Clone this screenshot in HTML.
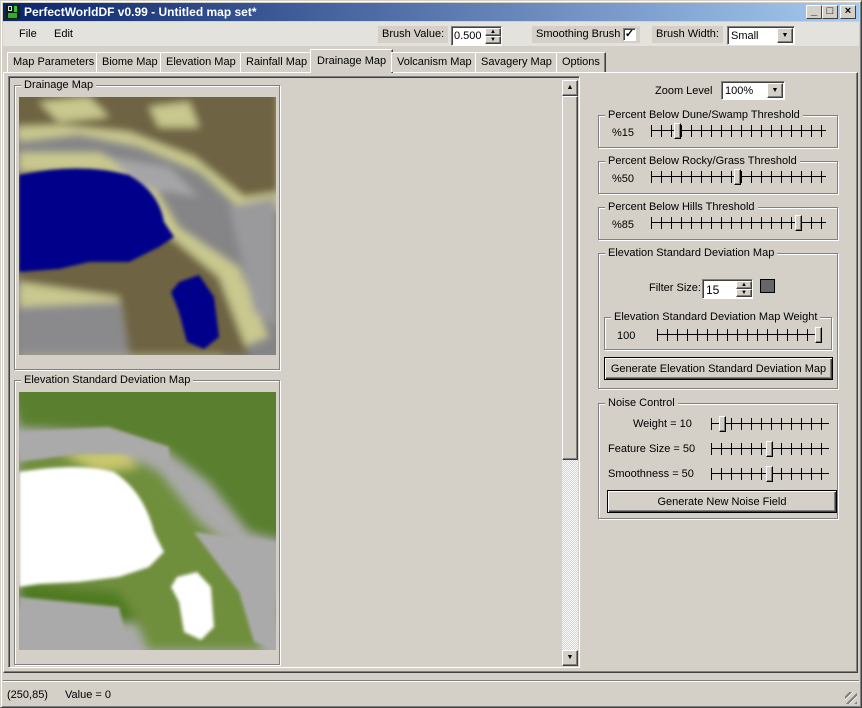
<!DOCTYPE html>
<html><head><style>
*{box-sizing:border-box;margin:0;padding:0}
body{width:862px;height:708px;background:#d4d0c8;font-family:"Liberation Sans",sans-serif;font-size:11px;color:#000;position:relative;overflow:hidden}
.a{position:absolute}
.win{left:0;top:0;width:862px;height:708px;border:1px solid;border-color:#d4d0c8 #404040 #404040 #d4d0c8;box-shadow:inset 1px 1px #fff,inset -1px -1px #808080}
.title{left:3px;top:3px;width:856px;height:18px;background:linear-gradient(90deg,#0a246a,#a6caf0);color:#fff;font-weight:bold;font-size:12px;line-height:18px;padding-left:21px}
.tb{width:16px;height:14px;top:5px;background:#d4d0c8;border:1px solid;border-color:#fff #404040 #404040 #fff;font-size:11px;color:#000;text-align:center;line-height:11px;font-weight:bold}
.bar{left:3px;top:22px;width:856px;height:24px;background:#e4e2dc}
.lbl{background:#d4d0c8;height:17px;line-height:17px;padding:0 4px;top:26px}
.sunk{background:#fff;border:1px solid;border-color:#808080 #fff #fff #808080;box-shadow:inset 1px 1px #404040}
.rais{background:#d4d0c8;border:1px solid;border-color:#fff #404040 #404040 #fff;box-shadow:inset -1px -1px #808080;font-size:6px;text-align:center;line-height:6px}
.tab{top:52px;height:20px;line-height:18px;padding:0 5px;border:1px solid;border-color:#fff #404040 transparent #fff;border-bottom:none;box-shadow:inset -1px 0 #808080;background:#d4d0c8}
.grp{border:1px solid #808080;box-shadow:1px 1px #fff,inset 1px 1px #fff}
.gt{position:absolute;top:-7px;left:6px;background:#d4d0c8;padding:0 3px;line-height:13px}
.sl{height:12px;background:repeating-linear-gradient(90deg,#000 0 1px,transparent 1px 10px);}
.sl::before{content:"";position:absolute;left:0;right:0;top:5px;height:1px;background:#000}
.th{position:absolute;top:-2px;width:7px;height:16px;background:#d4d0c8;border:1px solid;border-color:#fff #000 #000 #fff;box-shadow:inset -1px -1px #808080}
.btn{text-align:center;line-height:22px;border:1px solid #000;background:#d4d0c8;box-shadow:inset 1px 1px #fff,inset -1px -1px #404040,inset -2px -2px #808080}
</style></head><body>
<div class="a win"></div>
<div class="a title">PerfectWorldDF v0.99 - Untitled map set*</div>
<div class="a" style="left:6px;top:5px;width:14px;height:14px;background:#102010"><div class="a" style="left:2px;top:1px;width:4px;height:5px;border:1px solid #ddd"></div><div class="a" style="left:8px;top:1px;width:3px;height:6px;background:#3c3"></div><div class="a" style="left:2px;top:8px;width:9px;height:5px;background:#3a3"></div></div>
<div class="a tb" style="left:806px">_</div>
<div class="a tb" style="left:822px">□</div>
<div class="a tb" style="left:840px">×</div>
<div class="a bar"></div>
<div class="a" style="left:19px;top:28px">File</div>
<div class="a" style="left:54px;top:28px">Edit</div>
<div class="a lbl" style="left:378px">Brush Value:</div>
<div class="a sunk" style="left:451px;top:26px;width:51px;height:20px;padding:3px 2px">0.500</div>
<div class="a rais" style="left:485px;top:28px;width:16px;height:8px">▲</div>
<div class="a rais" style="left:485px;top:36px;width:16px;height:8px">▼</div>
<div class="a lbl" style="left:532px;width:108px">Smoothing Brush</div>
<div class="a sunk" style="left:623px;top:28px;width:13px;height:13px;font-size:11px;line-height:10px;text-align:center;font-weight:bold">✓</div>
<div class="a lbl" style="left:652px">Brush Width:</div>
<div class="a sunk" style="left:727px;top:26px;width:68px;height:19px;padding:3px 3px">Small</div>
<div class="a rais" style="left:777px;top:28px;width:16px;height:15px;font-size:7px;line-height:13px">▼</div>

<div class="a" style="left:3px;top:72px;width:855px;height:601px;border:1px solid;border-color:#fff #404040 #404040 #fff;box-shadow:inset -1px -1px #808080"></div>
<div class="a tab" style="left:7px">Map Parameters</div>
<div class="a tab" style="left:96px">Biome Map</div>
<div class="a tab" style="left:160px">Elevation Map</div>
<div class="a tab" style="left:240px">Rainfall Map</div>
<div class="a tab" style="left:310px;top:49px;height:24px;line-height:22px;padding:0 6px">Drainage Map</div>
<div class="a tab" style="left:391px">Volcanism Map</div>
<div class="a tab" style="left:475px">Savagery Map</div>
<div class="a tab" style="left:556px">Options</div>

<div class="a" style="left:8px;top:76px;width:572px;height:592px;border:1px solid;border-color:#808080 #fff #fff #808080;box-shadow:inset 1px 1px #404040"></div>
<div class="a" style="left:562px;top:80px;width:16px;height:586px;background:repeating-conic-gradient(#d4d0c8 0 25%,#fff 0 50%) 0 0/2px 2px"></div>
<div class="a rais" style="left:562px;top:80px;width:16px;height:16px;font-size:7px;line-height:13px">▲</div>
<div class="a rais" style="left:562px;top:96px;width:16px;height:364px"></div>
<div class="a rais" style="left:562px;top:650px;width:16px;height:16px;font-size:7px;line-height:13px">▼</div>

<div class="a grp" style="left:14px;top:85px;width:266px;height:285px"><span class="gt">Drainage Map</span></div>
<svg class="a" style="left:19px;top:97px" width="257" height="258">
<defs><filter id="b"><feGaussianBlur stdDeviation="4"/></filter><filter id="b2"><feGaussianBlur stdDeviation="1.5"/></filter></defs>
<rect width="257" height="258" fill="#858587"/>
<g filter="url(#b)">
<path d="M-10 -10H270V110L230 120 180 75 120 50 60 38 0 45Z" fill="#c9c88f"/>
<path d="M-10 -10H260V95L225 100 175 60 110 35 40 28 -10 30Z" fill="#6e6443"/>
<path d="M20 5L70 0 90 20 40 25Z" fill="#c9c88f"/>
<path d="M130 10L170 5 180 30 140 30Z" fill="#c9c88f"/>
<path d="M0 55L80 55 130 80 160 130 220 170 250 240 200 260 0 260Z" fill="#c9c88f"/>
<path d="M0 75L90 75 140 130 200 180 230 258 110 258 100 200 0 185Z" fill="#6e6443"/>
<path d="M0 210L100 205 110 258 0 258Z" fill="#8a8a8d"/>
<path d="M210 110L257 100 257 230 235 215Z" fill="#9a9a9c"/>
<path d="M90 60L150 70 180 100 120 90Z" fill="#a5a5a8"/>
</g>
<g filter="url(#b2)">
<path d="M0 78Q60 65 110 78Q140 95 145 125L155 140 140 150 110 165 70 165 40 172 0 175Z" fill="#00008b"/>
<path d="M160 185L180 178 195 200 200 240 185 252 168 245 160 215 152 195Z" fill="#00008b"/>
</g>
</svg>

<div class="a grp" style="left:14px;top:380px;width:266px;height:285px"><span class="gt">Elevation Standard Deviation Map</span></div>
<svg class="a" style="left:19px;top:392px" width="257" height="258">
<defs><filter id="c"><feGaussianBlur stdDeviation="5"/></filter><filter id="c2"><feGaussianBlur stdDeviation="1.5"/></filter></defs>
<rect width="257" height="258" fill="#aaaaaa"/>
<g filter="url(#c)">
<path d="M-10 -10H270V150L230 140 190 90 150 60 80 40 0 35Z" fill="#5a7f2e"/>
<path d="M0 60L80 50 140 80 180 130 230 170 260 220 240 258 130 258 110 215 0 200Z" fill="#6f8f3c"/>
<path d="M40 60L100 55 120 75 80 80Z" fill="#c8c86e"/>
<path d="M0 190L100 200 120 230 60 230 0 215Z" fill="#4f7a22"/>
</g>
<path d="M0 40L90 35 150 55 150 70 120 62 60 62 0 70Z" fill="#aaaaaa" filter="url(#c2)"/>
<path d="M175 140L257 150 257 258 235 250 220 200Z" fill="#aaaaaa" filter="url(#c2)"/>
<path d="M0 205L100 215 110 258 0 258Z" fill="#aaaaaa" filter="url(#c2)"/>
<g filter="url(#c2)">
<path d="M0 80Q60 70 95 80Q125 100 135 140L145 160 130 175 100 185 60 190 20 192 0 195Z" fill="#fff"/>
<path d="M158 185L178 180 192 195 195 235 182 248 165 240 160 210 152 195Z" fill="#fff"/>
</g>
</svg>

<!-- right panel -->
<div class="a" style="left:655px;top:85px">Zoom Level</div>
<div class="a sunk" style="left:721px;top:81px;width:64px;height:19px;padding:3px 3px">100%</div>
<div class="a rais" style="left:767px;top:83px;width:16px;height:15px;font-size:7px;line-height:13px">▼</div>

<div class="a grp" style="left:598px;top:115px;width:240px;height:33px"><span class="gt">Percent Below Dune/Swamp Threshold</span></div>
<div class="a" style="left:612px;top:127px">%15</div>
<div class="a sl" style="left:651px;top:125px;width:175px"><div class="th" style="left:23px"></div></div>
<div class="a grp" style="left:598px;top:161px;width:240px;height:33px"><span class="gt">Percent Below Rocky/Grass Threshold</span></div>
<div class="a" style="left:612px;top:173px">%50</div>
<div class="a sl" style="left:651px;top:171px;width:175px"><div class="th" style="left:83px"></div></div>
<div class="a grp" style="left:598px;top:207px;width:240px;height:33px"><span class="gt">Percent Below Hills Threshold</span></div>
<div class="a" style="left:612px;top:219px">%85</div>
<div class="a sl" style="left:651px;top:217px;width:175px"><div class="th" style="left:144px"></div></div>

<div class="a grp" style="left:598px;top:253px;width:240px;height:136px"><span class="gt">Elevation Standard Deviation Map</span></div>
<div class="a" style="left:649px;top:282px">Filter Size:</div>
<div class="a sunk" style="left:702px;top:279px;width:51px;height:20px;padding:3px 3px;font-size:12px">15</div>
<div class="a rais" style="left:736px;top:281px;width:16px;height:8px">▲</div>
<div class="a rais" style="left:736px;top:289px;width:16px;height:8px">▼</div>
<div class="a" style="left:760px;top:279px;width:15px;height:14px;background:#666;border:1px solid #000"></div>
<div class="a grp" style="left:604px;top:317px;width:228px;height:33px"><span class="gt">Elevation Standard Deviation Map Weight</span></div>
<div class="a" style="left:617px;top:330px">100</div>
<div class="a sl" style="left:657px;top:329px;width:165px"><div class="th" style="left:158px"></div></div>
<div class="a btn" style="left:604px;top:357px;width:229px;height:23px">Generate Elevation Standard Deviation Map</div>

<div class="a grp" style="left:598px;top:403px;width:240px;height:116px"><span class="gt">Noise Control</span></div>
<div class="a" style="left:633px;top:418px">Weight = 10</div>
<div class="a sl" style="left:711px;top:418px;width:118px"><div class="th" style="left:8px"></div></div>
<div class="a" style="left:608px;top:443px">Feature Size = 50</div>
<div class="a sl" style="left:711px;top:443px;width:118px"><div class="th" style="left:55px"></div></div>
<div class="a" style="left:608px;top:468px">Smoothness = 50</div>
<div class="a sl" style="left:711px;top:468px;width:118px"><div class="th" style="left:55px"></div></div>
<div class="a btn" style="left:607px;top:490px;width:230px;height:23px">Generate New Noise Field</div>

<div class="a" style="left:3px;top:680px;width:856px;height:2px;border-top:1px solid #808080;border-bottom:1px solid #fff"></div>
<div class="a" style="left:7px;top:689px">(250,85)</div>
<div class="a" style="left:65px;top:689px">Value = 0</div>
<div class="a" style="left:845px;top:692px;width:12px;height:12px;background:repeating-linear-gradient(135deg,transparent 0 3px,#808080 3px 5px,#fff 5px 6px)"></div>
</body></html>
